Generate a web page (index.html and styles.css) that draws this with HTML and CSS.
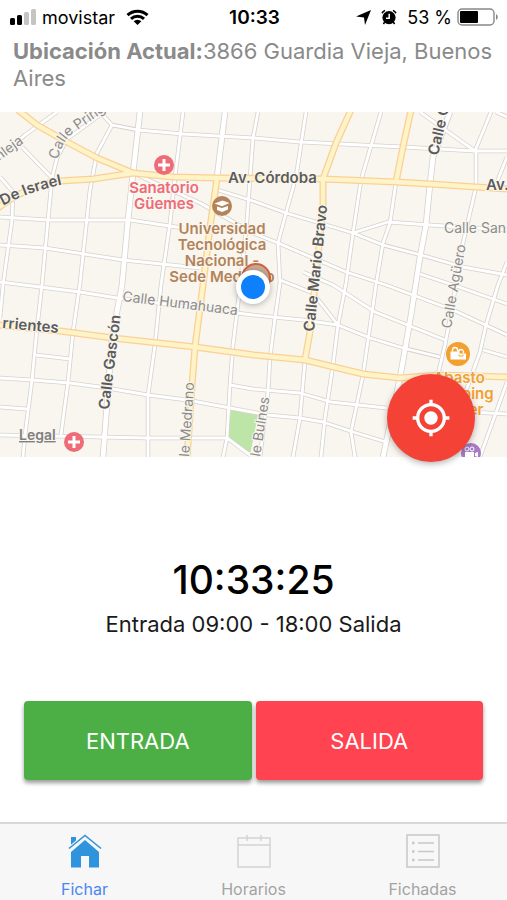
FILE: index.html
```html
<!DOCTYPE html>
<html lang="es">
<head>
  <meta charset="UTF-8">
  <meta name="viewport" content="width=device-width, initial-scale=1.0">
  <title>Fichar</title>
  <link rel="stylesheet" href="styles.css">
</head>
<body>
  <header class="status-bar">
    <div class="status-left">
      <svg width="27" height="17" viewBox="0 0 27 17">
        <rect x="0" y="9" width="5" height="7" rx="1.5"/>
        <rect x="7" y="6" width="5" height="10" rx="1.5"/>
        <rect class="signal-off" x="14" y="3" width="5" height="13" rx="1.5"/>
        <rect class="signal-off" x="21" y="0" width="5" height="16" rx="1.5"/>
      </svg>
      <span>movistar</span>
      <svg class="wifi" width="23" height="17" viewBox="0 0 23 17">
        <path d="M1.5 6.2a14.5 14.5 0 0 1 20 0M5 9.8a9.4 9.4 0 0 1 13 0" fill="none" stroke="#000" stroke-width="3"/>
        <path d="M7.6 12.2a5.7 5.7 0 0 1 7.8 0L11.5 16z"/>
      </svg>
    </div>
    <div class="status-time">10:33</div>
    <div class="status-right">
      <svg width="15" height="15" viewBox="0 0 15 15"><path d="M15 0L9 15l-1-7.5L0 6.5z"/></svg>
      <svg class="alarm" width="16" height="16" viewBox="0 0 16 16">
        <circle cx="8" cy="8.6" r="6.6"/>
        <path d="M1 4.2a9 9 0 0 1 3-2.8M15 4.2a9 9 0 0 0-3-2.8M3.6 13.2L2.4 15M12.4 13.2l1.2 1.8" fill="none" stroke="#000" stroke-width="1.6"/>
        <path d="M8.2 4.8v4.4H5" fill="none" stroke="#fff" stroke-width="1.5"/>
      </svg>
      <span>53 %</span>
      <svg width="42" height="18" viewBox="0 0 42 18">
        <rect x="1" y="1" width="36" height="16" rx="4" fill="#fff" stroke="#888" stroke-width="1.4"/>
        <rect x="3" y="3" width="18" height="12" rx="1"/>
        <path d="M39 6v6a3.4 3.4 0 0 0 0-6z" fill="#888"/>
      </svg>
    </div>
  </header>

  <p class="location"><strong>Ubicación Actual:</strong>3866 Guardia Vieja, Buenos Aires</p>

  <div class="map">
    <svg class="map-canvas" viewBox="0 0 507 345" role="img" aria-label="Mapa">
      <defs>
        <!-- calles chicas -->
        <g id="streets">
          <path d="M100 0L112 13L138 18L183 22L254 26L300 30L403 35L475 39H507"/>
          <path d="M112 13L97 41L90 78L80 171L73 220L68 270L61 323"/>
          <path d="M183 0L175 65L170 111L161 173L155 233L148 283V345"/>
          <path d="M57 0L25 23L0 45M104 0L67 27L57 46L52 66L48 108L42 173L37 216L32 268L25 323L23 345"/>
          <path d="M22 35L52 66M0 65L13 80L12 108L3 173L0 206"/>
          <path d="M0 105L48 108H130L183 116"/>
          <path d="M0 133L45 136L123 148L200 156"/>
          <path d="M0 170L40 175L80 180L117 186L253 203L303 208"/>
          <path d="M133 61L153 70L200 91L253 121L278 131L346 160L386 173L453 198L507 223"/>
          <path d="M218 78L253 89L286 101L353 121L383 133L421 143L463 155L507 163"/>
          <path d="M306 0L296 65L286 101L278 131L280 171L275 206L270 246L268 280L260 345"/>
          <path d="M258 0L253 26L250 66L247 108L240 175L233 233L230 273L227 326L223 345"/>
          <path d="M381 0L361 68L353 121L346 171L338 213L333 253L325 306L321 345"/>
          <path d="M305 249L300 306L293 345"/>
          <path d="M396 70L390 111L383 131L376 173L363 263L351 320L355 345"/>
          <path d="M420 0L475 39L491 0M476 39V75L463 131L453 190L445 233L438 262M496 0L507 5M507 45L495 75"/>
          <path d="M353 121L388 110L430 113L507 118"/>
          <path d="M303 160L333 173L375 200L445 228"/>
          <path d="M280 168L313 181L338 213L303 208M338 213L370 226L403 236L440 245"/>
          <path d="M420 162L453 173L507 192M507 150L498 173L486 213L480 240L462 290M483 238L507 245M507 270L480 345M470 300L507 302"/>
          <path d="M230 273L253 277L300 281L331 290L386 296"/>
          <path d="M0 266L32 268L70 271L107 276L148 283L187 288L230 296L268 303L300 306L323 310L353 320L386 330"/>
          <path d="M36 243L70 247M0 295L27 297M0 323L100 325L148 326H227L250 343"/>
        </g>
        <!-- calles anchas -->
        <g id="roads">
          <path d="M140 0L133 61L128 108L122 173L112 226L103 345"/>
          <path d="M450 0L433 45L430 72L426 113L420 145L411 203L400 266L383 345"/>
          <path d="M225 0L217 66"/>
        </g>
        <!-- avenidas -->
        <g id="avenues">
          <path d="M18 -2L37 13L67 30L97 46L133 61"/>
          <path d="M-2 96Q30 72 60 69L93 67L133 61L173 65L217 66L323 67L396 70L430 72L507 77"/>
          <path d="M217 66L213 95L210 115L203 173L195 235L192 273L187 347"/>
          <path d="M351 -2L336 31L323 67V95L310 220L305 248"/>
          <path d="M411 -2L403 35L396 70"/>
          <path d="M-2 213L60 219L113 226L195 235L254 243L305 248L363 262L400 266L440 263L507 265"/>
        </g>
        <path id="israel" d="M-4 98Q28 78 76 70"/>
        <path id="pringles" d="M58 48Q62 29 73 21L130 -18"/>
      </defs>

      <rect width="507" height="345" fill="#f9f6f0"/>
      <path d="M231 298L258 303L250 343L227 325z" fill="#bde5a8"/>
      <g fill="none" stroke-linejoin="round">
        <use href="#streets" stroke="#d5d2cd" stroke-width="4.4"/>
        <use href="#roads" stroke="#d5d2cd" stroke-width="6.4"/>
        <use href="#streets" stroke="#fff" stroke-width="2.8"/>
        <use href="#roads" stroke="#fff" stroke-width="4.8"/>
        <use href="#avenues" stroke="#fbd095" stroke-width="7"/>
        <use href="#avenues" stroke="#fff3c8" stroke-width="4.4"/>
      </g>

      <g class="street-main">
        <text x="228" y="71">Av. Córdoba</text>
        <text x="486" y="78">Av.</text>
        <text><textPath href="#israel">. De Israel</textPath></text>
        <text transform="translate(2 216) rotate(5)">rrientes</text>
        <text transform="translate(109 298) rotate(-83)">Calle Gascón</text>
        <text transform="translate(314 220) rotate(-84)">Calle Mario Bravo</text>
        <text transform="translate(438 44) rotate(-77)">Calle G</text>
      </g>
      <g class="street-minor">
        <text x="444" y="121">Calle San</text>
        <text transform="translate(-1 49) rotate(-36)">nleja</text>
        <text><textPath href="#pringles">Calle Pring</textPath></text>
        <text transform="translate(122 189) rotate(7)">Calle Humahuaca</text>
        <text transform="translate(451 217) rotate(-80)">Calle Agüero</text>
        <text transform="translate(189 345) rotate(-86)">le Medrano</text>
        <text transform="translate(260 345) rotate(-81)">le Bulnes</text>
      </g>

      <g class="place place-health">
        <circle cx="164" cy="53" r="10"/>
        <path class="cross" d="M164 47v12M158 53h12"/>
        <text x="164" y="81">Sanatorio</text>
        <text x="164" y="97">Güemes</text>
        <circle cx="74" cy="330" r="10"/>
        <path class="cross" d="M74 324v12M68 330h12"/>
      </g>
      <g class="place place-school">
        <circle cx="222" cy="94" r="10"/>
        <path d="M214.500 91.500l8-3 7 2.500-7.500 3.200zM217 94.500l5 1.600 6-2v3.500l-6 2.500-5-2z" fill="#fff"/>
        <text x="222" y="122">Universidad</text>
        <text x="222" y="138">Tecnológica</text>
        <text x="222" y="154">Nacional -</text>
        <text x="222" y="170">Sede Medrano</text>
      </g>
      <g class="place place-shop">
        <circle cx="458" cy="242" r="12"/>
        <path d="M450.500 239.500h9v8h-9zM456 241.500h10v6h-10z" fill="#fff"/>
        <path d="M452.500 239.500v-1.500a2.500 2.500 0 0 1 5 0v1.500M458.500 241.500v-1.500a2.500 2.500 0 0 1 5 0v1.500" fill="none" stroke="#fff" stroke-width="1.3"/>
        <path d="M459 242.500v1.500h4v-1.500" fill="none" stroke="#f2a53a"/>
        <text x="459" y="271">Abasto</text>
        <text x="459" y="287">Shopping</text>
        <text x="459" y="303">Center</text>
      </g>
      <g>
        <circle cx="471" cy="341" r="10" fill="#a77cc6"/>
        <path d="M465 340h9v5h-9zM475 341l3-1v5l-3-1z" fill="#fff"/>
        <circle cx="467" cy="337" r="2" fill="none" stroke="#fff"/>
        <circle cx="472" cy="337" r="2" fill="none" stroke="#fff"/>
      </g>

      <a class="legal" href="#legal"><text x="19" y="328">Legal</text></a>

      <circle cx="256" cy="166" r="14" fill="#c9aa98" stroke="#d4613c" stroke-width="2"/>
      <circle class="dot-ring" cx="253" cy="175" r="17"/>
      <circle cx="253" cy="175" r="12" fill="#0f80fb"/>
    </svg>
    <button class="locate" type="button" aria-label="Mi ubicación">
      <svg width="40" height="40" viewBox="0 0 24 24" fill="#fff">
        <path d="M12 8c-2.210 0-4 1.790-4 4s1.790 4 4 4 4-1.790 4-4-1.790-4-4-4zm8.940 3c-.46-4.170-3.770-7.480-7.940-7.940V1h-2v2.060C6.830 3.520 3.520 6.830 3.060 11H1v2h2.060c.46 4.170 3.770 7.480 7.940 7.940V23h2v-2.060c4.170-.46 7.480-3.770 7.940-7.940H23v-2h-2.060zM12 19c-3.870 0-7-3.130-7-7s3.130-7 7-7 7 3.130 7 7-3.130 7-7 7z"/>
      </svg>
    </button>
  </div>

  <main class="clock">
    <div class="clock-time">10:33:25</div>
    <div class="clock-range">Entrada 09:00 - 18:00 Salida</div>
    <div class="actions">
      <button class="btn btn-in" type="button">ENTRADA</button>
      <button class="btn btn-out" type="button">SALIDA</button>
    </div>
  </main>

  <nav class="tabs">
    <a class="tab active" href="#fichar">
      <svg width="34" height="34" viewBox="0 0 34 34">
        <path d="M3 3h5v5.500L3 13zM17 6L31 18v15.500H21V22h-8v11.500H3V18z" fill="#2f94dc"/>
        <path d="M1 15L17 1.500 33 15" fill="none" stroke="#f7f7f7" stroke-width="4"/>
        <path d="M1 14.500L17 1.500 33 14.500" fill="none" stroke="#2f94dc" stroke-width="1.600"/>
      </svg>
      <span>Fichar</span>
    </a>
    <a class="tab" href="#horarios">
      <svg width="34" height="34" viewBox="0 0 34 34" fill="none" stroke="#d3d3d3" stroke-width="1.500">
        <path d="M1 4h32v29H1zM1 11h32M10 1v6M24 1v6"/>
      </svg>
      <span>Horarios</span>
    </a>
    <a class="tab" href="#fichadas">
      <svg width="34" height="34" viewBox="0 0 34 34" fill="none" stroke="#c8c8c8" stroke-width="1.500">
        <path d="M1 1h32v32H1zM12 9h16M12 17.500h16M12 26h16"/>
        <path d="M6 9h2.500M6 17.500h2.500M6 26h2.500" stroke-width="2.500"/>
      </svg>
      <span>Fichadas</span>
    </a>
  </nav>
</body>
</html>
```
FILE: styles.css
```css
* {
  box-sizing: border-box;
}
body {
  margin: 0;
  min-height: 100vh;
  display: flex;
  flex-direction: column;
  font-family: Inter, "Liberation Sans", sans-serif;
  background-color: #fff;
  color: #000;
}
button {
  border: none;
  font-family: inherit;
  cursor: pointer;
}
.status-bar {
  display: grid;
  grid-template-columns: 1fr auto 1fr;
  align-items: center;
  height: 34px;
  padding: 0 8px 0 10px;
  font-size: 18px;
}
.status-left,
.status-right {
  display: flex;
  align-items: center;
  gap: 5px;
}
.status-right {
  justify-content: flex-end;
}
.status-time {
  font-size: 19px;
  font-weight: 600;
}
.signal-off {
  fill: #c4c4c4;
}
.wifi {
  margin-left: 6px;
}
.alarm {
  margin: 0 5px;
}
.location {
  margin: 0;
  padding: 4px 12px 20px 13px;
  font-size: 22px;
  line-height: 27px;
  color: #8a8a8a;
}
.map {
  position: relative;
}
.map-canvas {
  display: block;
  width: 100%;
}
.map-canvas text {
  font-size: 15px;
  paint-order: stroke;
  stroke: #f9f6f0;
  stroke-width: 2px;
}
.street-main {
  font-weight: 600;
  fill: #5c5c5c;
}
.map-canvas .street-minor text,
.map-canvas .legal text {
  font-size: 14px;
}
.street-minor {
  fill: #8c8c8c;
}
.place {
  font-weight: 600;
  text-anchor: middle;
}
.place-health {
  fill: #ee6b78;
}
.cross {
  stroke: #fff;
  stroke-width: 3;
}
.place-school {
  fill: #b3835a;
}
.place-shop {
  fill: #f2a030;
}
.legal {
  font-weight: 600;
  fill: #808080;
  text-decoration: underline;
}
.dot-ring {
  fill: #fff;
  filter: drop-shadow(0 1px 3px rgba(0, 0, 0, 0.3));
}
.locate {
  position: absolute;
  right: 32px;
  bottom: -5px;
  display: flex;
  align-items: center;
  justify-content: center;
  width: 88px;
  height: 88px;
  padding: 0;
  border-radius: 50%;
  background-color: #f44336;
  box-shadow: 0 2px 6px rgba(0, 0, 0, 0.3);
}
.clock {
  flex: 1;
  padding: 98px 24px 0;
  text-align: center;
}
.clock-time {
  font-size: 39px;
  font-weight: 500;
  line-height: 50px;
}
.clock-range {
  margin-top: 4px;
  font-size: 22px;
  line-height: 30px;
  color: #1a1a1a;
}
.actions {
  display: flex;
  gap: 4px;
  margin-top: 62px;
}
.btn {
  flex: 1;
  height: 79px;
  border-radius: 4px;
  color: #fff;
  font-size: 22px;
  box-shadow: 0 3px 4px rgba(0, 0, 0, 0.4);
}
.btn-in {
  background-color: #4caf46;
}
.btn-out {
  background-color: #ff4350;
}
.tabs {
  display: flex;
  height: 78px;
  border-top: 2px solid #d8d8d8;
  background-color: #f7f7f7;
}
.tab {
  flex: 1;
  display: flex;
  flex-direction: column;
  align-items: center;
  gap: 11px;
  padding-top: 10px;
  color: #a3a3a3;
  font-size: 16px;
  line-height: 20px;
  text-decoration: none;
}
.tab.active {
  color: #4a86f0;
}
```
